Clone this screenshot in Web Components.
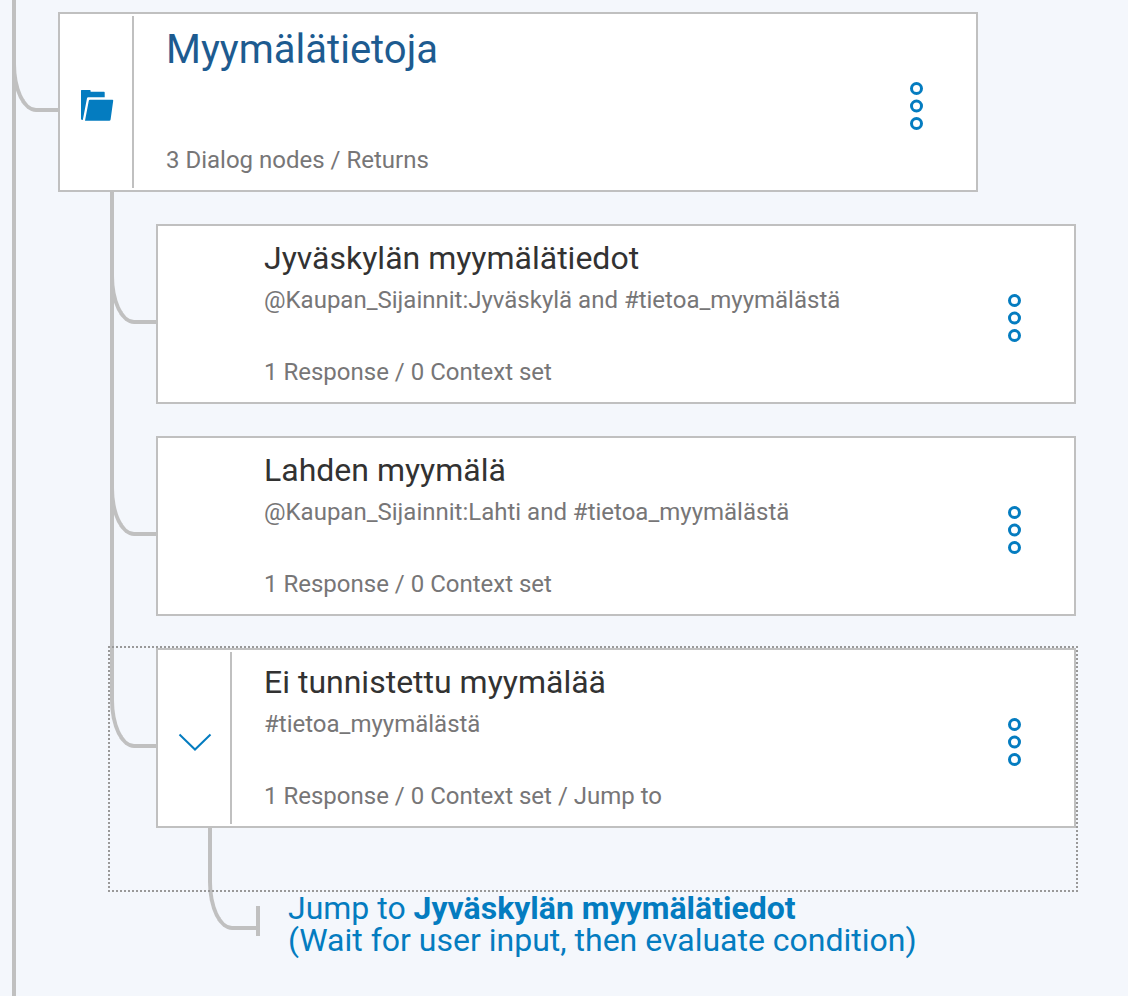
<!DOCTYPE html>
<html lang="fi">
<head>
<meta charset="utf-8">
<title>Dialog nodes</title>
<style>
  body {
    margin: 0;
    background: #f4f7fc;
    color: #323232;
    font-family: Roboto, sans-serif;
    --line: #c0c0c0;
    --accent: #047cc0;
    --muted: #777677;
    --outline: #999999;
  }
</style>
</head>
<body>
<dialog-tree>
  <dialog-card kind="folder">
    Myymälätietoja
    <span slot="summary">3 Dialog nodes / Returns</span>
  </dialog-card>
  <dialog-branch slot="children">
    <dialog-card>
      Jyväskylän myymälätiedot
      <span slot="condition">@Kaupan_Sijainnit:Jyväskylä and #tietoa_myymälästä</span>
      <span slot="summary">1 Response / 0 Context set</span>
    </dialog-card>
  </dialog-branch>
  <dialog-branch slot="children">
    <dialog-card>
      Lahden myymälä
      <span slot="condition">@Kaupan_Sijainnit:Lahti and #tietoa_myymälästä</span>
      <span slot="summary">1 Response / 0 Context set</span>
    </dialog-card>
  </dialog-branch>
  <dialog-branch slot="children" last selected>
    <dialog-card kind="parent">
      Ei tunnistettu myymälää
      <span slot="condition">#tietoa_myymälästä</span>
      <span slot="summary">1 Response / 0 Context set / Jump to</span>
    </dialog-card>
  </dialog-branch>
  <jump-target slot="children">
    Jyväskylän myymälätiedot
    <span slot="mode">(Wait for user input, then evaluate condition)</span>
  </jump-target>
</dialog-tree>

<script>
const define = (name, html) => {
  const template = document.createElement('template');
  template.innerHTML = html;
  customElements.define(name, class extends HTMLElement {
    constructor() {
      super();
      this.attachShadow({ mode: 'open' }).append(template.content.cloneNode(true));
    }
  });
};

define('dialog-tree', `
  <style>
    :host { display: flex; min-height: 100vh; padding: 0 52px 0 12px; box-sizing: border-box; }
    .rail { flex: none; width: 46px; box-sizing: border-box; border-left: 4px solid var(--line); }
    .elbow { height: 112px; margin-left: -4px; box-sizing: border-box; border: solid var(--line);
             border-width: 0 0 4px 4px; border-bottom-left-radius: 24px 48px; }
    main { flex: 1; min-width: 0; padding: 12px 0 32px; }
    .root { margin-right: 98px; }
    .children { margin-left: 52px; }
  </style>
  <div class="rail"><div class="elbow"></div></div>
  <main>
    <div class="root"><slot></slot></div>
    <div class="children"><slot name="children"></slot></div>
  </main>`);

define('dialog-branch', `
  <style>
    :host { display: flex; margin-top: 32px; }
    :host([selected]) { padding-bottom: 62px; outline: 2px dotted var(--outline); }
    .rail { flex: none; width: 46px; margin-top: -32px; box-sizing: border-box; border-left: 4px solid var(--line); }
    :host([last]) .rail { border-color: transparent; }
    .elbow { height: 132px; margin-left: -4px; box-sizing: border-box; border: solid var(--line);
             border-width: 0 0 4px 4px; border-bottom-left-radius: 24px 48px; }
    .node { flex: 1; min-width: 0; }
  </style>
  <div class="rail"><div class="elbow"></div></div>
  <div class="node"><slot></slot></div>`);

define('dialog-card', `
  <style>
    :host { display: flex; min-height: 180px; box-sizing: border-box; background: #fff; border: 2px solid var(--line); }
    button { border: 0; background: none; color: var(--accent); cursor: pointer;
             display: flex; align-items: center; justify-content: center; }
    .toggle { flex: none; width: 74px; margin: 2px 0; padding: 8px 0 0 2px; border-right: 2px solid transparent; visibility: hidden; }
    :host([kind]) .toggle { visibility: visible; border-color: var(--line); }
    .menu { flex: none; width: 54px; margin-right: 32px; padding: 8px 0 0; }
    svg { display: none; fill: none; stroke: currentColor; }
    .menu svg, :host([kind=folder]) .folder, :host([kind=parent]) .chevron { display: block; }
    .folder { fill: currentColor; stroke: none; }
    .text { flex: 1; min-width: 0; display: flex; flex-direction: column; padding: 12px 0 14px 32px; }
    h2 { margin: 0 0 6px; font-size: 32px; line-height: 40px; font-weight: 400; }
    :host([kind=folder]) h2 { font-size: 40px; line-height: 48px; color: #1d5b90; }
    p { margin: 0; font-size: 24px; line-height: 32px; color: var(--muted); }
    .summary { margin-top: auto; }
  </style>
  <button class="toggle" aria-label="Expand or collapse">
    <svg class="folder" width="34" height="34" viewBox="0 0 34 34"><path d="M1 1.6Q1 1 1.6 1H10q.6 0 .6.7v1H24q.7 0 .7.7v4.8H8.2Q7.2 8.200 7 9.200L2.800 31Q1 31 1 30zM9.900 10.700H32.400q1 0 .8 1L30.600 30.500q-.2 1.200-1.400 1.200H5L8.800 11.700q.2-1 1.100-1z"/></svg>
    <svg class="chevron" width="34" height="18" viewBox="0 0 34 18" stroke-width="2"><path d="M1.500 1.500 17 16.500 32.500 1.500"/></svg>
  </button>
  <div class="text">
    <h2><slot></slot></h2>
    <p><slot name="condition"></slot></p>
    <p class="summary"><slot name="summary"></slot></p>
  </div>
  <button class="menu" aria-label="Node options">
    <svg width="14" height="50" viewBox="0 0 14 50" stroke-width="3"><circle cx="6.500" cy="7.500" r="5"/><circle cx="6.500" cy="25" r="5"/><circle cx="6.500" cy="42.500" r="5"/></svg>
  </button>`);

define('jump-target', `
  <style>
    :host { display: flex; align-items: flex-start; margin-left: 98px; color: var(--accent); }
    .elbow { flex: none; width: 48px; height: 102px; margin-top: -62px; box-sizing: border-box; border: solid var(--line);
             border-width: 0 0 4px 4px; border-bottom-left-radius: 24px 48px; }
    .stop { flex: none; width: 4px; height: 30px; margin-top: 16px; background: var(--line); }
    a { flex: 1; min-width: 0; padding-left: 28px; margin-top: 2px; color: inherit; text-decoration: none; font-size: 32px; line-height: 32px; }
    span { display: block; }
  </style>
  <div class="elbow"></div>
  <div class="stop"></div>
  <a href="#"><span>Jump to <b><slot></slot></b></span><slot name="mode"></slot></a>`);
</script>
</body>
</html>
